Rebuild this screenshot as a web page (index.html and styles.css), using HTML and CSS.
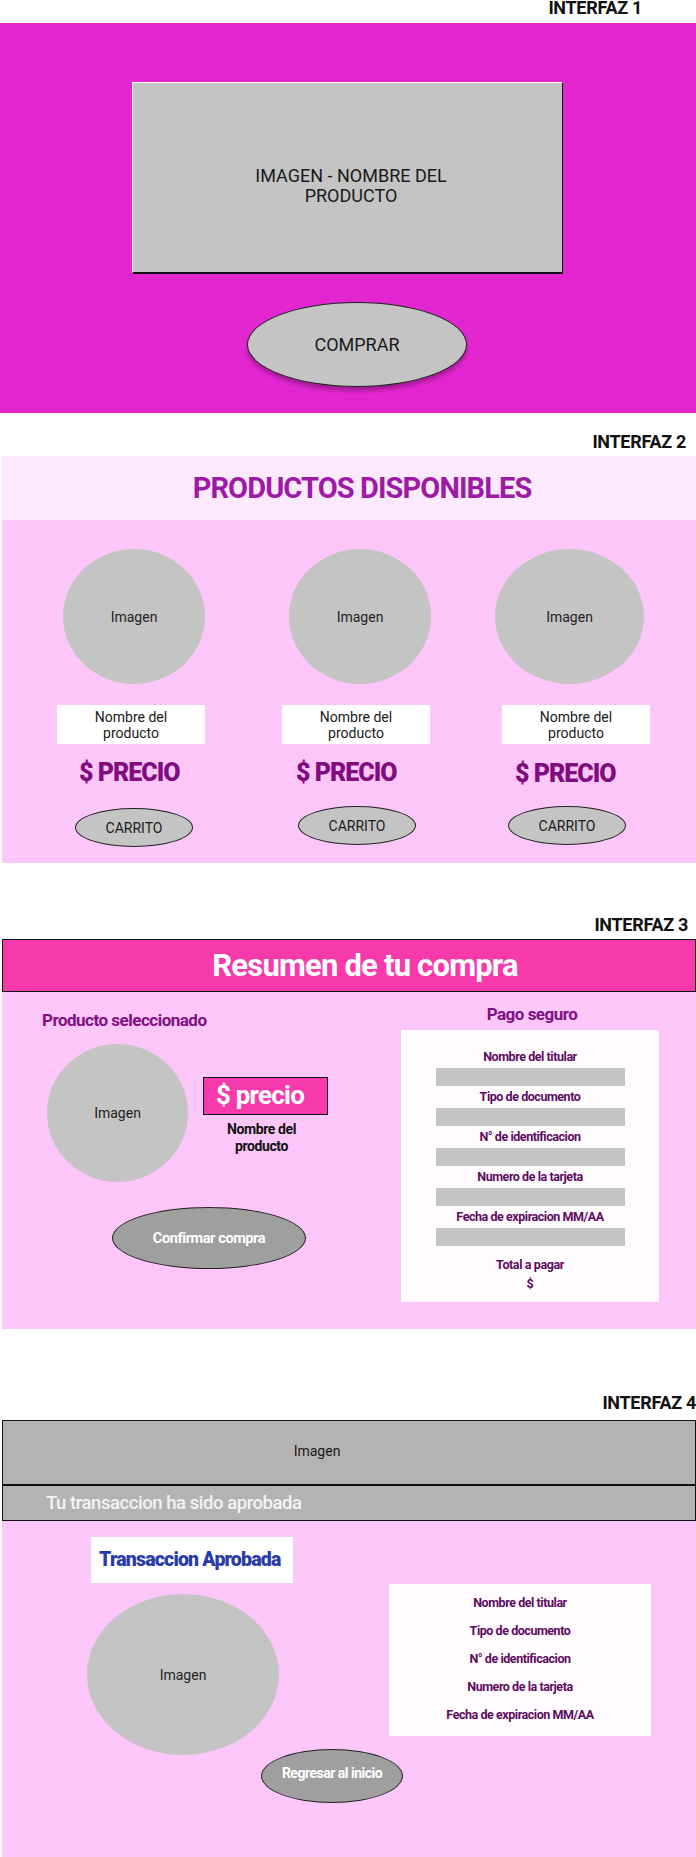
FILE: index.html
```html
<!DOCTYPE html>
<html lang="es">
<head>
<meta charset="utf-8">
<title>Interfaces</title>
<link rel="stylesheet" href="styles.css">
</head>
<body>
<div class="label l1">INTERFAZ 1</div>
<section class="s1">
  <div class="hero"><span>IMAGEN - NOMBRE DEL<br>PRODUCTO</span></div>
  <div class="buy">COMPRAR</div>
</section>

<div class="label l2">INTERFAZ 2</div>
<section class="s2">
  <header class="s2-head"><h1>PRODUCTOS DISPONIBLES</h1></header>
  <div class="s2-body">
    <div class="prod p1">
      <div class="circ">Imagen</div>
      <div class="pname">Nombre del<br>producto</div>
      <div class="price">$ PRECIO</div>
      <div class="cart">CARRITO</div>
    </div>
    <div class="prod p2">
      <div class="circ">Imagen</div>
      <div class="pname">Nombre del<br>producto</div>
      <div class="price">$ PRECIO</div>
      <div class="cart">CARRITO</div>
    </div>
    <div class="prod p3">
      <div class="circ">Imagen</div>
      <div class="pname">Nombre del<br>producto</div>
      <div class="price">$ PRECIO</div>
      <div class="cart">CARRITO</div>
    </div>
  </div>
</section>

<div class="label l3">INTERFAZ 3</div>
<section class="s3">
  <header class="s3-head"><h2>Resumen de tu compra</h2></header>
  <div class="s3-body">
    <div class="s3-left">
      <div class="sel">Producto seleccionado</div>
      <div class="sel-row">
        <div class="circ c3">Imagen</div>
        <div class="sel-info">
          <div class="pbox">$ precio</div>
          <div class="sel-name">Nombre del<br>producto</div>
        </div>
      </div>
      <div class="confirm">Confirmar compra</div>
    </div>
    <div class="s3-right">
      <div class="pago">Pago seguro</div>
      <div class="panel">
        <div class="flabel">Nombre del titular</div><div class="bar"></div>
        <div class="flabel">Tipo de documento</div><div class="bar"></div>
        <div class="flabel">N° de identificacion</div><div class="bar"></div>
        <div class="flabel">Numero de la tarjeta</div><div class="bar"></div>
        <div class="flabel">Fecha de expiracion MM/AA</div><div class="bar"></div>
        <div class="total">Total a pagar</div>
        <div class="dollar">$</div>
      </div>
    </div>
  </div>
</section>

<div class="label l4">INTERFAZ 4</div>
<section class="s4">
  <div class="banner">Imagen</div>
  <div class="approved">Tu transaccion ha sido aprobada</div>
  <div class="s4-body">
    <div class="s4-row">
      <div class="s4-left">
        <div class="ta">Transaccion Aprobada</div>
        <div class="circ c4">Imagen</div>
      </div>
      <div class="panel2">
        <div class="plabel">Nombre del titular</div>
        <div class="plabel">Tipo de documento</div>
        <div class="plabel">N° de identificacion</div>
        <div class="plabel">Numero de la tarjeta</div>
        <div class="plabel">Fecha de expiracion MM/AA</div>
      </div>
    </div>
    <div class="back">Regresar al inicio</div>
  </div>
</section>
</body>
</html>
```

FILE: styles.css
```css
* { box-sizing: border-box; margin: 0; padding: 0; }
body {
  margin: 0;
  width: 696px;
  font-family: Roboto, "Liberation Sans", sans-serif;
  color: #1a1a1a;
  background: #fff;
}

/* labels */
.label {
  font-weight: 700;
  font-size: 18px;
  line-height: 16px;
  letter-spacing: -0.3px;
  text-align: right;
  color: #111;
}
.l1 { height: 23px; padding-right: 54px; }
.l2 { height: 43px; padding-top: 21px; padding-right: 10px; }
.l3 { height: 76px; padding-top: 54px; padding-right: 8px; }
.l4 { height: 91px; padding-top: 66px; padding-right: 0; }

/* interfaz 1 */
.s1 {
  background: #e327d0;
  height: 390px;
  padding-top: 59px;
}
.hero {
  margin-left: 132px;
  width: 431px;
  height: 192px;
  background: #c4c4c4;
  border-top: 1px solid #fff;
  border-left: 1px solid #eee;
  border-right: 1px solid #111;
  border-bottom: 2px solid #111;
  display: flex;
  align-items: center;
  justify-content: center;
  text-align: center;
  font-size: 18px;
  line-height: 20px;
  padding-top: 17px;
  padding-left: 7px;
  color: #1a1a1a;
}
.buy {
  margin-top: 28px;
  margin-left: 247px;
  width: 220px;
  height: 85px;
  border-radius: 50%;
  background: #c4c4c4;
  border: 1px solid #222;
  box-shadow: 0 4px 4px rgba(0,0,0,0.28);
  display: flex;
  align-items: center;
  justify-content: center;
  font-size: 18px;
}

/* interfaz 2 */
.s2 { margin-left: 2px; }
.s2-head {
  height: 64px;
  background: #fde9fd;
  display: flex;
  align-items: center;
  justify-content: center;
  padding-left: 26px;
}
.s2-head h1 {
  font-size: 29px;
  font-weight: 700;
  letter-spacing: -0.9px;
  color: #9c1ba6;
  line-height: 30px;
}
.s2-body {
  height: 343px;
  background: #fcc6f8;
  display: flex;
  padding-top: 29px;
}
.prod { display: flex; flex-direction: column; }
.p1 { margin-left: 55px; width: 150px; }
.p2 { margin-left: 75px; width: 150px; }
.p3 { margin-left: 63px; width: 156px; }
.circ {
  background: #c4c4c4;
  border-radius: 50%;
  display: flex;
  align-items: center;
  justify-content: center;
  font-size: 14px;
  color: #1f1f1f;
}
.prod .circ { width: 142px; height: 135px; }
.p1 .circ { margin-left: 6px; }
.p2 .circ { margin-left: 7px; }
.p3 .circ { width: 149px; }
.pname {
  margin-top: 21px;
  width: 148px;
  height: 39px;
  background: #fff;
  text-align: center;
  font-size: 14px;
  line-height: 16px;
  padding-top: 4px;
  color: #1a1a1a;
}
.p3 .pname { margin-left: 7px; }
.price {
  margin-top: 15px;
  height: 28px;
  font-size: 25px;
  line-height: 28px;
  font-weight: 900;
  letter-spacing: -1px;
  color: #810c80;
}
.p1 .price { margin-left: 22px; }
.p2 .price { margin-left: 14px; }
.p3 .price { margin-left: 20px; margin-top: 16px; }
.cart {
  margin-top: 21px;
  width: 118px;
  height: 39px;
  border-radius: 50%;
  background: #c4c4c4;
  border: 1px solid #222;
  display: flex;
  align-items: center;
  justify-content: center;
  font-size: 14px;
}
.p1 .cart { margin-left: 18px; }
.p2 .cart { margin-left: 16px; margin-top: 19px; }
.p3 .cart { margin-left: 13px; margin-top: 18px; }

/* interfaz 3 */
.s3 { margin-left: 2px; }
.s3-head {
  height: 53px;
  background: #f73aab;
  border: 1px solid #111;
  display: flex;
  align-items: center;
  justify-content: center;
  padding-left: 32px;
}
.s3-head h2 {
  font-size: 31px;
  font-weight: 700;
  letter-spacing: -0.8px;
  color: #fff;
  line-height: 32px;
}
.s3-body {
  height: 337px;
  background: #fcc6f8;
  display: flex;
}
.s3-left { width: 399px; padding-top: 18px; }
.sel {
  margin-left: 40px;
  font-size: 17px;
  line-height: 20px;
  font-weight: 700;
  letter-spacing: -0.5px;
  color: #7d1183;
}
.sel-row { display: flex; margin-top: 14px; }
.c3 { margin-left: 45px; width: 141px; height: 138px; }
.sel-info {
  margin-left: 15px;
  margin-top: 33px;
  display: flex;
  flex-direction: column;
  align-items: center;
  width: 125px;
}
.pbox {
  width: 125px;
  height: 38px;
  background: #f73aab;
  border: 1.5px solid #111;
  color: #fff;
  font-weight: 700;
  font-size: 26px;
  letter-spacing: -0.8px;
  line-height: 34px;
  padding-left: 12px;
}
.sel-name {
  margin-top: 6px;
  text-align: center;
  font-weight: 700;
  font-size: 14px;
  line-height: 17px;
  letter-spacing: -0.4px;
  color: #111;
  padding-right: 8px;
}
.confirm {
  margin-top: 25px;
  margin-left: 110px;
  width: 194px;
  height: 62px;
  border-radius: 50%;
  background: #a09fa0;
  border: 1px solid #222;
  display: flex;
  align-items: center;
  justify-content: center;
  color: #fff;
  font-weight: 700;
  font-size: 14.5px;
  letter-spacing: -0.4px;
}
.s3-right { width: 258px; padding-top: 11px; }
.pago {
  text-align: center;
  font-size: 17px;
  line-height: 22px;
  font-weight: 700;
  letter-spacing: -0.5px;
  color: #7d1183;
  padding-left: 4px;
  height: 27px;
}
.panel {
  height: 272px;
  background: #fffbff;
  padding-top: 16px;
  display: flex;
  flex-direction: column;
  align-items: center;
}
.flabel {
  height: 22px;
  line-height: 22px;
  font-size: 12.5px;
  font-weight: 700;
  letter-spacing: -0.45px;
  color: #5d0b60;
  text-align: center;
}
.bar {
  width: 189px;
  height: 18px;
  background: #c4c4c4;
}
.total {
  margin-top: 10px;
  font-size: 12.5px;
  line-height: 18px;
  font-weight: 700;
  letter-spacing: -0.4px;
  color: #5d0b60;
}
.dollar {
  font-size: 12.5px;
  line-height: 20px;
  font-weight: 700;
  color: #5d0b60;
}

/* interfaz 4 */
.s4 { margin-left: 2px; }
.banner {
  height: 66px;
  background: #b3b3b3;
  border: 1px solid #111;
  border-bottom: 2px solid #111;
  display: flex;
  align-items: center;
  justify-content: center;
  padding-right: 64px;
  padding-bottom: 4px;
  font-size: 14px;
  color: #1a1a1a;
}
.approved {
  height: 35px;
  background: #b3b3b3;
  border: 1px solid #111;
  border-top: 0;
  font-size: 18.5px;
  font-weight: 500;
  letter-spacing: -0.45px;
  line-height: 34px;
  color: #f4f4f4;
  padding-left: 43px;
}
.s4-body {
  height: 336px;
  background: #fcc6f8;
  padding-top: 16px;
}
.s4-row { display: flex; }
.s4-left { width: 290px; display: flex; flex-direction: column; }
.ta {
  margin-left: 89px;
  width: 202px;
  height: 46px;
  background: #fff;
  color: #2a3ba8;
  font-weight: 900;
  font-size: 19.5px;
  letter-spacing: -0.8px;
  line-height: 46px;
  padding-left: 8px;
}
.c4 { margin-top: 11px; margin-left: 85px; width: 192px; height: 161px; font-size: 14px; }
.panel2 {
  margin-left: 97px;
  margin-top: 47px;
  width: 262px;
  height: 152px;
  background: #fffbff;
  padding-top: 5px;
  display: flex;
  flex-direction: column;
  align-items: center;
}
.plabel {
  height: 28px;
  line-height: 28px;
  font-size: 12.5px;
  font-weight: 700;
  letter-spacing: -0.45px;
  color: #5d0b60;
}
.back {
  margin-top: -6px;
  margin-left: 259px;
  width: 142px;
  height: 54px;
  border-radius: 50%;
  background: #a09fa0;
  border: 1px solid #222;
  display: flex;
  align-items: center;
  justify-content: center;
  color: #fff;
  font-weight: 700;
  font-size: 14px;
  letter-spacing: -0.5px;
  padding-bottom: 6px;
}
```
